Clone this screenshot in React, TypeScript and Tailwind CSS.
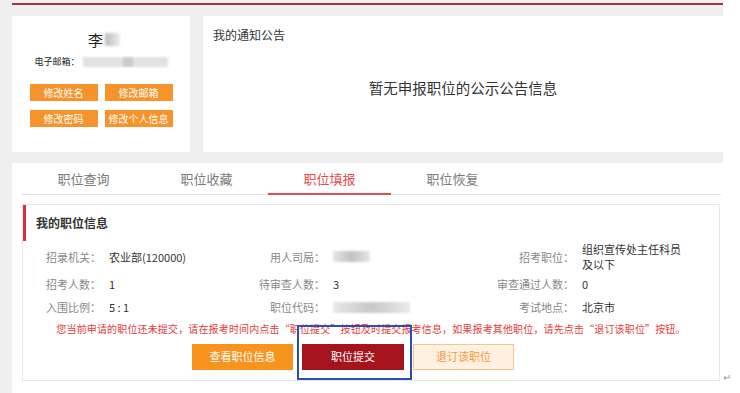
import React from "react";

const tabs = ["职位查询", "职位收藏", "职位填报", "职位恢复"];

function Blur({ className }: { className: string }) {
    return <div className={`blur-[1.5px] ${className}`} />;
}

export default function App() {
    return (
        <div
            className="relative h-[393px] w-[740px] overflow-hidden bg-white text-[#333]"
            style={{ fontFamily: '"Noto Sans CJK SC", "Noto Sans", sans-serif' }}
        >
            <div className="flex h-[393px] w-[723px] flex-col bg-[#efefef] pl-[12px] pt-[3px]">
                {/* top rule */}
                <div className="h-[1.5px] bg-[#a8323f]" />

                {/* profile + notices */}
                <div className="mt-[11px] flex gap-[13px]">
                    <div className="flex h-[136px] w-[178px] flex-col items-center bg-white pt-[14px]">
                        <div className="flex items-center gap-[2px] pl-[6px] text-[15px] leading-[20px] text-[#222]">
                            <span>李</span>
                            <Blur className="h-[13px] w-[15px] bg-gradient-to-r from-[#b9b9b9] to-[#ececec]" />
                        </div>
                        <div className="mt-[6px] flex items-center gap-[3px] text-[9px] leading-[12px] text-[#222]">
                            <span>电子邮箱：</span>
                            <div className="flex h-[10px] w-[85px] items-center bg-[#e2e2e2] blur-[1px]">
                                <div className="ml-[40px] h-[10px] w-[10px] bg-[#cbcbcb]" />
                            </div>
                        </div>
                        <div className="mt-[16px] grid grid-cols-[68px_68px] gap-x-[7px] gap-y-[9px]">
                            {["修改姓名", "修改邮箱", "修改密码", "修改个人信息"].map((t) => (
                                <button
                                    key={t}
                                    className="h-[17px] bg-[#f6932a] text-[10px] leading-[17px] text-white"
                                >
                                    {t}
                                </button>
                            ))}
                        </div>
                    </div>

                    <div className="h-[136px] flex-1 bg-white px-[10px] pt-[11px]">
                        <h2 className="text-[12px] leading-[16px] text-[#333]">我的通知公告</h2>
                        <p className="mt-[35px] text-center text-[14.5px] leading-[20px] text-[#333]">
                            暂无申报职位的公示公告信息
                        </p>
                    </div>
                </div>

                {/* tabs + position panel */}
                <div className="mt-[11px] flex-1 bg-white">
                    <div className="ml-[10px] mr-[2px] flex h-[32px] border-b border-[#e2e2e2]">
                        {tabs.map((t, i) => (
                            <div
                                key={t}
                                className={
                                    i === 2
                                        ? "-mb-px w-[123px] border-b-2 border-[#e54c4c] pt-[7px] text-center text-[13px] leading-[18px] text-[#e54c4c]"
                                        : "w-[123px] pt-[7px] text-center text-[13px] leading-[18px] text-[#7a7a7a]"
                                }
                            >
                                {t}
                            </div>
                        ))}
                    </div>

                    <div className="relative ml-[10px] mr-[3px] mt-[9px] h-[177px] border border-[#e8e8e8]">
                        <div className="flex h-[36px] items-center border-l-[3px] border-[#d8323c] pl-[10px] pt-[1px] text-[12px] font-bold text-[#333]">
                            我的职位信息
                        </div>

                        <div className="grid grid-cols-[78px_146px_78px_171px_78px_1fr] grid-rows-[32px_23px_23px] items-center text-[11px] leading-[16px]">
                            <span className="text-right text-[#888]">招录机关：</span>
                            <span className="pl-[8px]">农业部(120000)</span>
                            <span className="text-right text-[#888]">用人司局：</span>
                            <div className="ml-[8px] h-[11px] w-[37px] bg-gradient-to-r from-[#e6e6e6] via-[#c2c2c2] to-[#e6e6e6] blur-[1px]" />
                            <span className="text-right text-[#888]">招考职位：</span>
                            <span className="pl-[8px] leading-[15px]">
                                组织宣传处主任科员
                                <br />
                                及以下
                            </span>

                            <span className="text-right text-[#888]">招考人数：</span>
                            <span className="pl-[8px]">1</span>
                            <span className="text-right text-[#888]">待审查人数：</span>
                            <span className="pl-[8px]">3</span>
                            <span className="text-right text-[#888]">审查通过人数：</span>
                            <span className="pl-[8px]">0</span>

                            <span className="text-right text-[#888]">入围比例：</span>
                            <span className="pl-[8px]">5 : 1</span>
                            <span className="text-right text-[#888]">职位代码：</span>
                            <div className="ml-[8px] h-[11px] w-[77px] bg-gradient-to-r from-[#e8e8e8] via-[#c8c8c8] to-[#eaeaea] blur-[1px]" />
                            <span className="text-right text-[#888]">考试地点：</span>
                            <span className="pl-[8px]">北京市</span>
                        </div>

                        <p className="mt-[3px] text-center text-[10px] leading-[14px] tracking-[0.15px] text-[#e33b3b]">
                            您当前申请的职位还未提交，请在报考时间内点击“职位提交”按钮及时提交报考信息，如果报考其他职位，请先点击“退订该职位”按钮。
                        </p>

                        <div className="mt-[8px] flex gap-[9px] pl-[169px]">
                            <button className="h-[26px] w-[101px] bg-[#f7941e] text-[11px] text-white">查看职位信息</button>
                            <button className="h-[26px] w-[102px] bg-[#a5141c] text-[11px] text-white">职位提交</button>
                            <button className="h-[26px] w-[101px] border border-[#f6c48c] bg-[#fff1e2] text-[11px] text-[#f39a38]">
                                退订该职位
                            </button>
                        </div>

                        {/* highlight frame */}
                        <div className="absolute left-[274px] top-[120px] h-[55px] w-[115px] border-2 border-[#2d4db5]" />
                    </div>
                </div>
            </div>

            <span className="absolute left-[723px] top-[371px] text-[10px] leading-[12px] text-[#999]">↵</span>
        </div>
    );
}
